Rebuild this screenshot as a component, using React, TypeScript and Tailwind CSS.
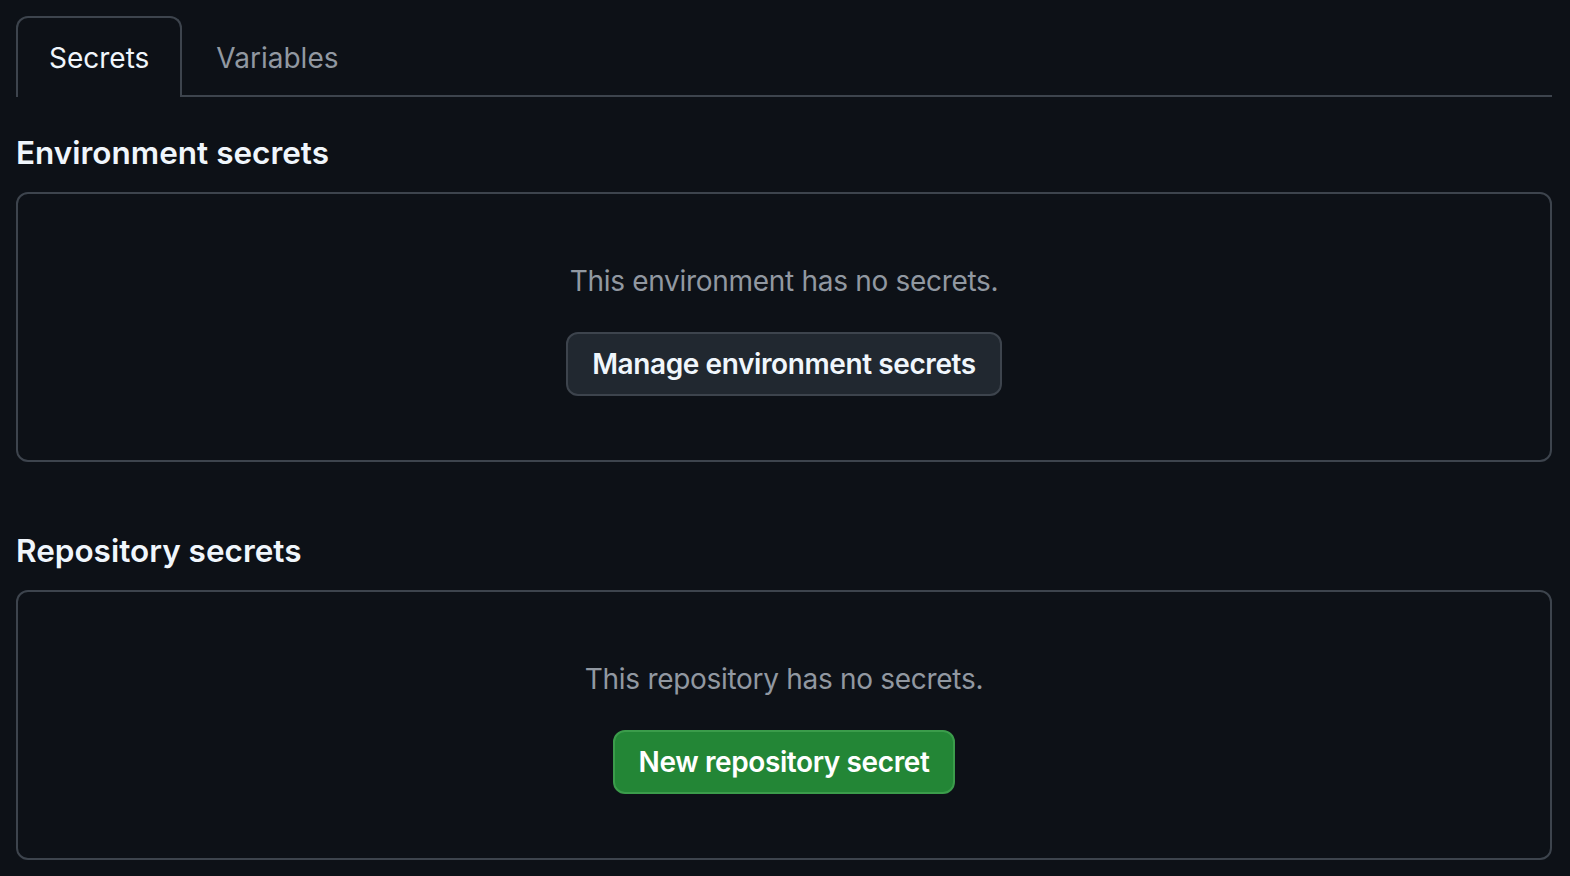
import React from 'react';

const font = { fontFamily: 'Inter, "Noto Sans", sans-serif' };

const EmptyBox: React.FC<{ message: string; children: React.ReactNode }> = ({ message, children }) => (
  <div className="border-2 border-[#3d444d] rounded-[12px] flex flex-col items-center pt-[66px] pb-[64px]">
    <p className="text-[28px] leading-[42px] tracking-[-0.3px] text-[#9198a1]">{message}</p>
    <div className="mt-[30px]">{children}</div>
  </div>
);

const App: React.FC = () => {
  return (
    <div className="min-h-screen bg-[#0d1117] text-[#f0f6fc] pl-4 pr-[18px] pt-4" style={font}>
      <div className="flex items-end border-b-2 border-[#3d444d]">
        <div className="h-[81px] -mb-[2px] px-[31px] pt-[1px] flex items-center border-2 border-b-0 border-[#3d444d] rounded-t-[12px] bg-[#0d1117] text-[28px] text-[#f0f6fc]">
          Secrets
        </div>
        <div className="h-[79px] px-[34px] pt-[5px] flex items-center text-[28px] text-[#9198a1]">
          Variables
        </div>
      </div>

      <h2 className="mt-[33px] mb-[17px] text-[31.5px] leading-[45px] font-semibold">Environment secrets</h2>
      <EmptyBox message="This environment has no secrets.">
        <button className="h-[64px] px-[24px] rounded-[12px] border-2 border-[#3d444d] bg-[#212830] text-[28px] tracking-[-0.4px] font-semibold text-[#f0f6fc]">
          Manage environment secrets
        </button>
      </EmptyBox>

      <h2 className="mt-[66px] mb-[17px] text-[31.5px] leading-[45px] font-semibold">Repository secrets</h2>
      <EmptyBox message="This repository has no secrets.">
        <button className="h-[64px] px-[24px] rounded-[12px] border-2 border-[#3b9c4b] bg-[#238636] text-[28px] tracking-[-0.4px] font-semibold text-white">
          New repository secret
        </button>
      </EmptyBox>
    </div>
  );
};

export default App;
